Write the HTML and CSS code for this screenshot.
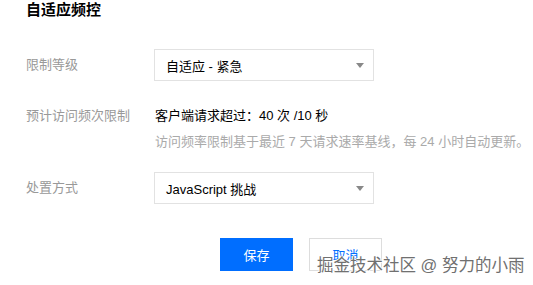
FILE: index.html
```html
<!DOCTYPE html>
<html lang="zh">
<head>
<meta charset="utf-8">
<link rel="stylesheet" href="styles.css">
</head>
<body>
<div class="panel">
  <div class="title">自适应频控</div>
  <div class="row row-select first">
    <div class="label">限制等级</div>
    <div class="control">
      <div class="select"><span>自适应 - 紧急</span><i class="caret"></i></div>
    </div>
  </div>
  <div class="row row-text">
    <div class="label">预计访问频次限制</div>
    <div class="control">
      <div class="value">客户端请求超过：40 次 /10 秒</div>
      <div class="help">访问频率限制基于最近 7 天请求速率基线，每 24 小时自动更新。</div>
    </div>
  </div>
  <div class="row row-select third">
    <div class="label">处置方式</div>
    <div class="control">
      <div class="select"><span>JavaScript 挑战</span><i class="caret"></i></div>
    </div>
  </div>
  <div class="actions">
    <button class="btn primary">保存</button>
    <button class="btn default">取消</button>
  </div>
</div>
<div class="watermark">掘金技术社区 @ 努力的小雨</div>
</body>
</html>
```
FILE: styles.css
```css
html, body {
  margin: 0;
  padding: 0;
  background: #fff;
}
body {
  font-family: "Liberation Sans", "Noto Sans CJK SC", sans-serif;
  font-size: 13px;
  color: #000;
  position: relative;
  width: 533px;
  height: 285px;
  overflow: hidden;
}
.panel {
  padding-left: 26px;
  display: flex;
  flex-direction: column;
}
.title {
  font-size: 15px;
  font-weight: bold;
  line-height: 20px;
  color: #000;
}
.row {
  display: flex;
  align-items: flex-start;
}
.label {
  width: 128px;
  flex: none;
  color: #999;
  line-height: 20px;
}
.row-select .label {
  line-height: 32px;
}
.first { margin-top: 29px; }
.row-text { margin-top: 25px; }
.third { margin-top: 20px; }
.control {
  display: flex;
  flex-direction: column;
}
.select {
  box-sizing: border-box;
  width: 220px;
  height: 32px;
  border: 1px solid #e2e2e2;
  display: flex;
  align-items: center;
  justify-content: space-between;
  padding: 0 9px 0 11px;
  color: #000;
}
.caret {
  width: 0;
  height: 0;
  border-left: 4px solid transparent;
  border-right: 4px solid transparent;
  border-top: 5px solid #888;
}
.value {
  line-height: 20px;
  color: #000;
  padding-left: 1px;
}
.help {
  margin-top: 6px;
  line-height: 20px;
  color: #aaa;
  padding-left: 1px;
}
.actions {
  display: flex;
  gap: 16px;
  margin-top: 34px;
  padding-left: 194px;
}
.btn {
  box-sizing: border-box;
  width: 73px;
  height: 33px;
  font-family: inherit;
  font-size: 13px;
  padding: 0;
  margin: 0;
  cursor: pointer;
}
.primary {
  background: #006eff;
  border: none;
  color: #fff;
}
.default {
  background: #fff;
  border: 1px solid #ddd;
  color: #006eff;
}
.watermark {
  position: absolute;
  left: 317px;
  top: 255px;
  font-size: 16.5px;
  line-height: 20px;
  color: #707070;
  white-space: nowrap;
  text-shadow: 1px 0 0 #fff, -1px 0 0 #fff, 0 1px 0 #fff, 0 -1px 0 #fff;
}
```
